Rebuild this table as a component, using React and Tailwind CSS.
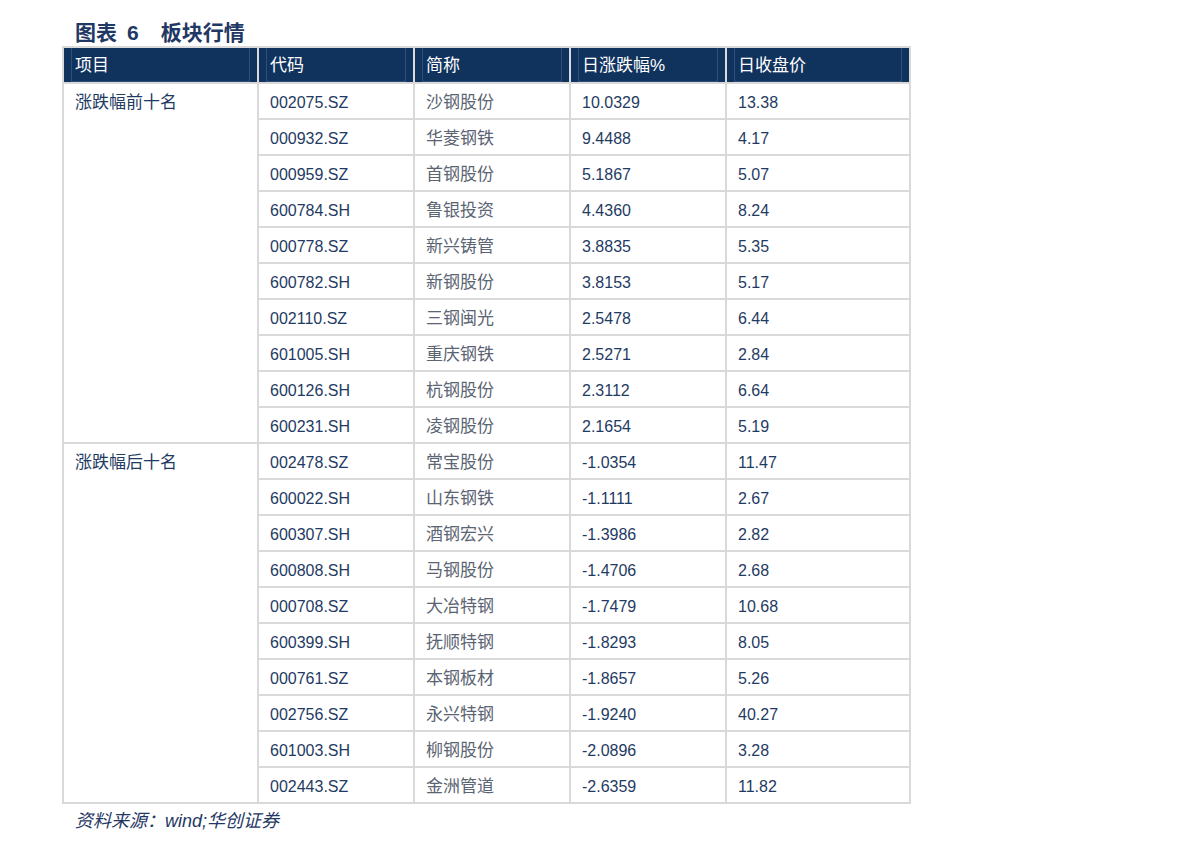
import React from "react";

const top = [
  ["002075.SZ", "沙钢股份", "10.0329", "13.38"],
  ["000932.SZ", "华菱钢铁", "9.4488", "4.17"],
  ["000959.SZ", "首钢股份", "5.1867", "5.07"],
  ["600784.SH", "鲁银投资", "4.4360", "8.24"],
  ["000778.SZ", "新兴铸管", "3.8835", "5.35"],
  ["600782.SH", "新钢股份", "3.8153", "5.17"],
  ["002110.SZ", "三钢闽光", "2.5478", "6.44"],
  ["601005.SH", "重庆钢铁", "2.5271", "2.84"],
  ["600126.SH", "杭钢股份", "2.3112", "6.64"],
  ["600231.SH", "凌钢股份", "2.1654", "5.19"],
];

const bottom = [
  ["002478.SZ", "常宝股份", "-1.0354", "11.47"],
  ["600022.SH", "山东钢铁", "-1.1111", "2.67"],
  ["600307.SH", "酒钢宏兴", "-1.3986", "2.82"],
  ["600808.SH", "马钢股份", "-1.4706", "2.68"],
  ["000708.SZ", "大冶特钢", "-1.7479", "10.68"],
  ["600399.SH", "抚顺特钢", "-1.8293", "8.05"],
  ["000761.SZ", "本钢板材", "-1.8657", "5.26"],
  ["002756.SZ", "永兴特钢", "-1.9240", "40.27"],
  ["601003.SH", "柳钢股份", "-2.0896", "3.28"],
  ["002443.SZ", "金洲管道", "-2.6359", "11.82"],
];

const font = { fontFamily: '"Liberation Sans", "Noto Sans CJK SC", sans-serif' };

const HeadCell = ({ children, w }) => (
  <th className={`${w} h-[36px] p-0 bg-[#10335e] border-2 border-[#d9d9d9] text-left font-normal align-top`}>
    <div className="h-[34px] mx-[7px] border-x border-b border-[#2f4f78] pl-[3px] pt-[7px] text-[17px] leading-[22px] text-white">
      {children}
    </div>
  </th>
);

const Group = ({ label, rows }) =>
  rows.map((r, i) => (
    <tr key={r[0]} className="h-[36px]">
      {i === 0 && (
        <td rowSpan={rows.length} className="border-2 border-[#d9d9d9] align-top pl-[11px] pt-[6px] text-[17px] text-[#1f3b63]">
          {label}
        </td>
      )}
      <td className="border-2 border-[#d9d9d9] pl-[11px] pt-[4px] text-[16px] text-[#1f3b63]">{r[0]}</td>
      <td className="border-2 border-[#d9d9d9] pl-[11px] pt-[4px] text-[17px] text-[#5a6472]">{r[1]}</td>
      <td className="border-2 border-[#d9d9d9] pl-[11px] pt-[4px] text-[16px] text-[#1f3b63]">{r[2]}</td>
      <td className="border-2 border-[#d9d9d9] pl-[11px] pt-[4px] text-[16px] text-[#1f3b63]">{r[3]}</td>
    </tr>
  ));

export default function App() {
  return (
    <div className="w-[1191px] h-[850px] bg-white pl-[62px] pt-[17px]" style={font}>
      <h1 className="flex items-center pl-[13px] h-[29px] pt-[2px] text-[21px] font-bold text-[#1f3864]">
        <span>图表</span>
        <span className="ml-[10px]">6</span>
        <span className="ml-[22px]">板块行情</span>
      </h1>
      <table className="border-collapse table-fixed w-[847px]">
        <thead>
          <tr>
            <HeadCell w="w-[195px]">项目</HeadCell>
            <HeadCell w="w-[156px]">代码</HeadCell>
            <HeadCell w="w-[156px]">简称</HeadCell>
            <HeadCell w="w-[156px]">日涨跌幅%</HeadCell>
            <HeadCell w="w-[184px]">日收盘价</HeadCell>
          </tr>
        </thead>
        <tbody>
          <Group label="涨跌幅前十名" rows={top} />
          <Group label="涨跌幅后十名" rows={bottom} />
        </tbody>
      </table>
      <p className="pl-[13px] mt-[4px] text-[18px] italic text-[#1f3864]">资料来源：wind;华创证券</p>
    </div>
  );
}
